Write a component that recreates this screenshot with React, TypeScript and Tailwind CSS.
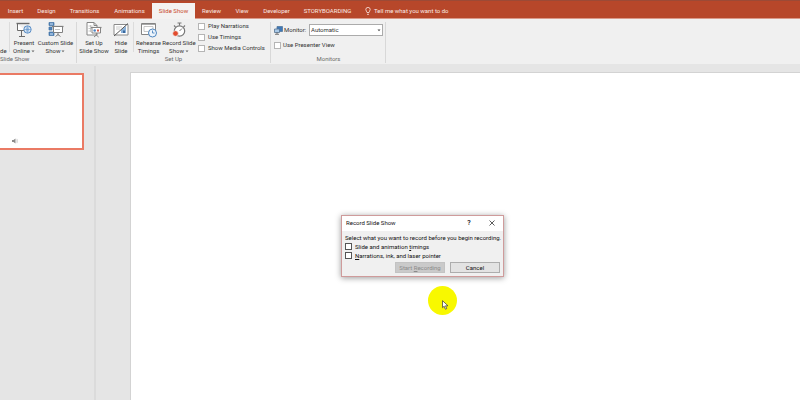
import React from "react";

const tabs = [
  { label: "Insert", width: "w-[31px]" },
  { label: "Design", width: "w-[31px]" },
  { label: "Transitions", width: "w-[45px]" },
  { label: "Animations", width: "w-[45px]" },
  { label: "Slide Show", width: "w-[43px]" },
  { label: "Review", width: "w-[33px]" },
  { label: "View", width: "w-[28px]" },
  { label: "Developer", width: "w-[41px]" },
  { label: "STORYBOARDING", width: "w-[61px]" },
];

function PresentIcon() {
  return (
    <svg viewBox="0 0 16 16" className="h-4 w-4" fill="none" stroke="#6b6b6b">
      <path d="M0.500 1.500h13" strokeWidth="1.400" />
      <path d="M1.500 2v6.500h8" fill="#fff" />
      <path d="M5.500 9v5M3 14.500h6" />
      <circle cx="11.500" cy="7.500" r="3.700" fill="#e4eef8" stroke="#5b8fc7" />
      <path d="M8 7.500h7M11.500 4v7M9.800 5c1 1.500 1 3.500 0 5M13.200 5c-1 1.500-1 3.500 0 5" stroke="#5b8fc7" strokeWidth="0.600" />
    </svg>
  );
}

function CustomShowIcon() {
  return (
    <svg viewBox="0 0 16 16" className="h-4 w-4" fill="none" stroke="#808080">
      <path d="M1 0.500h5v3H1zM1 5h3v3H1zM1 10h5v3.500H1z" fill="#4d82bb" stroke="#4472a4" strokeWidth="0.700" />
      <path d="M2 2h3M2 12h3" stroke="#d9e7f5" />
      <path d="M4 4.500h11.500" strokeWidth="1.300" />
      <path d="M5.500 5v5.500h9V5" fill="#fff" />
      <path d="M10 10.500v3M7.500 14.500l2.500-2 2.500 2" />
      <path d="M7 7.500h5" stroke="#c5c5c5" />
    </svg>
  );
}

function SetUpIcon() {
  return (
    <svg viewBox="0 0 16 16" className="h-4 w-4" fill="none" stroke="#858585">
      <path d="M1 0.500h7l3 3V13H1z" fill="#fff" />
      <path d="M8 0.500v3h3" />
      <path d="M2.500 4h4M2.500 6.500h3M2.500 9h2M4.500 3v7" stroke="#b5b5b5" strokeWidth="0.700" />
      <path d="M5 5.500h10.500" strokeWidth="1.200" />
      <path d="M6 6v5h8.500V6" fill="#fff" />
      <path d="M10.300 11v2.500M8 15l2.300-2 2.300 2" />
      <circle cx="8.700" cy="8.500" r="1.300" fill="#4b84c4" stroke="none" />
      <path d="M11 7.500h2v2h-2z" fill="#dc5945" stroke="none" />
    </svg>
  );
}

function HideIcon() {
  return (
    <svg viewBox="0 0 16 16" className="h-4 w-4" fill="none">
      <path d="M1 2.500h14v10.500H1z" fill="#fff" stroke="#8a8a8a" />
      <path d="M3 5h6M3 7h4" stroke="#b4b4b4" strokeWidth="0.700" />
      <path d="M8 11V8l5-4v7z" fill="#8bb2da" />
      <path d="M1 14L15 1.500" stroke="#555" />
      <path d="M10 8.500h2V11h-2z" fill="#39689d" />
    </svg>
  );
}

function RehearseIcon() {
  return (
    <svg viewBox="0 0 16 16" className="h-4 w-4" fill="none" stroke="#858585">
      <path d="M0.500 1.500h14v11H0.500z" fill="#fff" />
      <path d="M1 2h13" strokeWidth="1.400" />
      <path d="M3 4.500h9v5H3z" stroke="#b9b9b9" strokeWidth="0.800" />
      <circle cx="11.500" cy="11" r="4" fill="#edf4fb" stroke="#4e86bf" />
      <path d="M11.500 8.500V11h2" stroke="#4e86bf" strokeWidth="0.900" />
    </svg>
  );
}

function RecordIcon() {
  return (
    <svg viewBox="0 0 16 16" className="h-4 w-4" fill="none" stroke="#777">
      <circle cx="8.500" cy="9" r="5.200" fill="#fff" strokeWidth="1.200" />
      <path d="M8.500 3.500v-2M6.500 1h4M12.500 5l1.500-1.500M4.500 5L3 3.500" strokeWidth="1.100" />
      <path d="M8.500 9l2.500-2.500" strokeWidth="1" />
      <circle cx="4.500" cy="11.500" r="2.800" fill="#e14b2d" stroke="#f0f0f0" strokeWidth="0.700" />
    </svg>
  );
}

function MonitorIcon() {
  return (
    <svg viewBox="0 0 9 9" className="h-[9px] w-[9px]" fill="none">
      <path d="M3 0.500h5.500v5H3z" fill="#3f78b8" stroke="#56789c" strokeWidth="0.800" />
      <path d="M0.500 3h5v3.500h-5z" fill="#a9c9e8" stroke="#55728f" strokeWidth="0.800" />
      <path d="M3 6.500V8M1 8.300h4" stroke="#555" strokeWidth="0.800" />
    </svg>
  );
}

function Caret() {
  return (
    <svg viewBox="0 0 4 3" className="ml-px inline-block h-[3px] w-1" fill="#666">
      <path d="M0.500 0.500h3L2 2.300z" />
    </svg>
  );
}

function Tool({ icon, first, second, menu, width }: { icon: React.ReactNode; first: string; second: string; menu?: boolean; width: string }) {
  return (
    <button type="button" className={`flex shrink-0 flex-col items-center whitespace-nowrap leading-[8px] ${width}`}>
      {icon}
      <span className="mt-px">{first}</span>
      <span>
        {second}
        {menu && <Caret />}
      </span>
    </button>
  );
}

function Check({ label, className = "" }: { label: React.ReactNode; className?: string }) {
  return (
    <label className={`flex items-center whitespace-nowrap ${className}`}>
      <input type="checkbox" className="h-[7px] w-[7px] shrink-0 appearance-none border border-[#b5b5b5] bg-white checked:bg-[#b7472a]" />
      <span>{label}</span>
    </label>
  );
}

const groupLabel = "h-[8px] text-center leading-[8px] text-[#6a6a6a]";
const divider = "mb-[3px] w-px shrink-0 bg-[#dcdcdc]";

function Ribbon() {
  return (
    <section aria-label="Slide Show" className="flex h-[45px] shrink-0 bg-[#f0f0f0] pb-px pt-[3px] text-[#333]">
      <div className="flex w-[76px] shrink-0 flex-col justify-between">
        <div className="flex">
          <button type="button" className="w-[9px] self-end text-left leading-[8px]">de</button>
          <div className={divider} />
          <Tool icon={<PresentIcon />} first="Present" second="Online" menu width="w-[28px]" />
          <Tool icon={<CustomShowIcon />} first="Custom Slide" second="Show" menu width="w-[35px]" />
        </div>
        <div className="h-[8px] whitespace-nowrap leading-[8px] text-[#6a6a6a]">Slide Show</div>
      </div>
      <div className="w-px shrink-0 bg-[#d8d8d8]" />
      <div className="flex w-[193px] shrink-0 flex-col justify-between">
        <div className="flex">
          <Tool icon={<SetUpIcon />} first="Set Up" second="Slide Show" width="w-[34px]" />
          <Tool icon={<HideIcon />} first="Hide" second="Slide" width="w-[20px]" />
          <div className={`ml-[2px] ${divider}`} />
          <Tool icon={<RehearseIcon />} first="Rehearse" second="Timings" width="w-[29px]" />
          <Tool icon={<RecordIcon />} first="Record Slide" second="Show" menu width="w-[32px]" />
          <div className="flex flex-col gap-[3px] pl-[3px] leading-[8px]">
            <Check label="Play Narrations" className="gap-[3px]" />
            <Check label="Use Timings" className="gap-[3px]" />
            <Check label="Show Media Controls" className="gap-[3px]" />
          </div>
        </div>
        <div className={groupLabel}>Set Up</div>
      </div>
      <div className="w-px shrink-0 bg-[#d8d8d8]" />
      <div className="flex w-[114px] shrink-0 flex-col justify-between pl-[3px] pr-[2px]">
        <div className="flex flex-col gap-[5px] pt-[2px]">
          <div className="flex items-center">
            <MonitorIcon />
            <label htmlFor="monitor" className="ml-px w-[25px]">Monitor:</label>
            <div className="relative flex-1">
              <select id="monitor" className="block h-[12px] w-full appearance-none border border-[#ababab] bg-white pl-px leading-[10px] text-[#333]">
                <option>Automatic</option>
              </select>
              <svg viewBox="0 0 4 3" className="pointer-events-none absolute right-[2px] top-[5px] h-[3px] w-1" fill="#444">
                <path d="M0.500 0.500h3L2 2.300z" />
              </svg>
            </div>
          </div>
          <Check label="Use Presenter View" className="gap-[2px] leading-[8px]" />
        </div>
        <div className={groupLabel}>Monitors</div>
      </div>
      <div className="w-px shrink-0 bg-[#d8d8d8]" />
    </section>
  );
}

function RecordDialog() {
  return (
    <div role="dialog" aria-labelledby="record-title" className="absolute left-[341px] top-[215px] w-[163px] border border-[#cf9b9b] bg-[#f0f0f0] text-[#111] shadow-[0_1px_6px_rgba(0,0,0,0.4)]">
      <div className="flex h-[15px] items-center bg-white pb-px pl-[4px]">
        <h2 id="record-title" className="flex-1">Record Slide Show</h2>
        <button type="button" aria-label="Help" className="w-[22px] text-[7px] font-semibold">?</button>
        <button type="button" aria-label="Close" className="flex w-[23px] justify-center">
          <svg viewBox="0 0 6 6" className="h-[6px] w-[6px]" stroke="#333" strokeWidth="0.800">
            <path d="M0.500 0.500l5 5M5.500 0.500l-5 5" />
          </svg>
        </button>
      </div>
      <div className="flex flex-col px-[3px] pb-[3px] pt-[2px]">
        <p className="whitespace-nowrap leading-[9px]">Select what you want to record before you begin recording.</p>
        <Check label={<>Slide and animation <u>t</u>imings</>} className="gap-[3px] leading-[9px] [&>input]:border-[#555]" />
        <Check label={<><u>N</u>arrations, ink, and laser pointer</>} className="gap-[3px] leading-[9px] [&>input]:border-[#555]" />
        <div className="mt-[2px] flex justify-end gap-[5px]">
          <button type="button" disabled className="h-[11px] w-[50px] border border-[#c3c3c3] bg-[#cacaca] leading-[9px] text-[#8a8a8a]">Start <u>R</u>ecording</button>
          <button type="button" className="h-[11px] w-[50px] border border-[#adadad] bg-[#e3e3e3] leading-[9px]">Cancel</button>
        </div>
      </div>
    </div>
  );
}

export default function App() {
  return (
    <div className="relative flex h-screen flex-col overflow-hidden bg-[#e5e5e5] font-['Roboto','Liberation_Sans',sans-serif] text-[6px] leading-[8px]">
      <header className="flex h-[19px] shrink-0 border-b border-t border-b-[#d99a8a] border-t-[#9c4a36] bg-[#b7472a] text-[#fbe9e4]">
        <nav className="flex">
          {tabs.map((tab) =>
            tab.label === "Slide Show" ? (
              <button key={tab.label} type="button" aria-current="page" className={`-mb-px mt-[2px] whitespace-nowrap bg-[#f4f2f1] pb-px text-[#c9492b] ${tab.width}`}>{tab.label}</button>
            ) : (
              <button key={tab.label} type="button" className={`whitespace-nowrap pt-[2px] ${tab.width}`}>{tab.label}</button>
            ),
          )}
        </nav>
        <button type="button" className="ml-[7px] flex items-center gap-[3px] whitespace-nowrap pt-[2px]">
          <svg viewBox="0 0 6 8" className="h-2 w-[6px]" fill="none" stroke="#fbe9e4" strokeWidth="0.800">
            <path d="M2 5.500C2 4.500 0.800 4 0.800 2.600a2.200 2.200 0 0 1 4.400 0C5.200 4 4 4.500 4 5.500zM2 7.300h2" />
          </svg>
          Tell me what you want to do
        </button>
      </header>
      <Ribbon />
      <main className="flex min-h-0 flex-1">
        <aside className="mt-[2px] w-[96px] shrink-0 border-r-2 border-[#dbdbdb] pt-[7px]">
          <div className="flex h-[77px] w-[84px] items-end border-y-2 border-r-2 border-[#ea7a64] bg-white pb-[4px] pl-[12px]">
            <svg viewBox="0 0 6 6" className="h-[6px] w-[6px]" fill="#8b8b8b">
              <path d="M0 2h1.500L3.500 0.500v5L1.500 4H0z" />
              <path d="M4.300 1.500q1.400 1.500 0 3M5 0.800q1.800 2.200 0 4.400" fill="none" stroke="#bbb" strokeWidth="0.500" />
            </svg>
          </div>
        </aside>
        <div className="ml-[34px] mt-2 flex-1 border-l border-t border-[#d3d3d3] bg-white" />
      </main>
      <RecordDialog />
      <div className="pointer-events-none absolute left-[428px] top-[286px] h-[29px] w-[29px] rounded-full bg-[#f8f800]">
        <svg viewBox="0 0 7 10" className="ml-[14px] mt-[14px] h-[10px] w-[7px]" fill="#fff" stroke="#333" strokeWidth="0.700">
          <path d="M0.500 0.700v7l1.700-1.500 1.200 3 1.300-0.500-1.200-2.900H6z" />
        </svg>
      </div>
    </div>
  );
}
